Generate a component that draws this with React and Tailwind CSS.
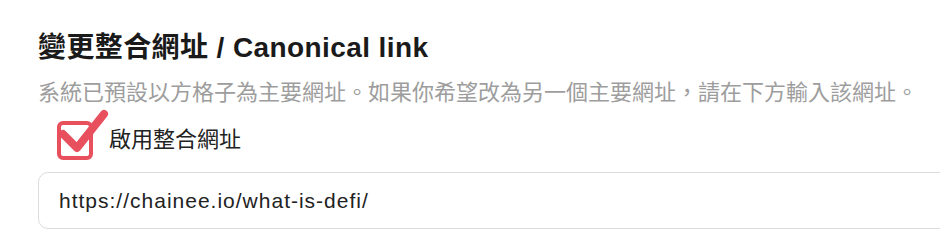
import React, { useState } from "react";

const font = "font-['Liberation_Sans','Noto_Sans_CJK_TC',sans-serif]";

const CheckIcon = ({ checked }) => (
  <svg width="54" height="54" viewBox="0 0 54 54" className="shrink-0">
    <rect x="4" y="15" width="32" height="35" rx="4" fill="#fff" stroke="#e9505e" strokeWidth="4" />
    {checked && (
      <polyline
        points="8,26 22,40 49,6"
        fill="none"
        stroke="#e9505e"
        strokeWidth="8"
        strokeLinecap="round"
        strokeLinejoin="round"
      />
    )}
  </svg>
);

const App = () => {
  const [enabled, setEnabled] = useState(true);
  const [url, setUrl] = useState("https://chainee.io/what-is-defi/");

  return (
    <div className={`w-[940px] h-[238px] overflow-hidden bg-white pl-[38px] pt-[30px] ${font}`}>
      <h2 className="text-[28px] leading-[36px] font-bold tracking-[0.4px] text-[#1a1a1a]">
        變更整合網址 / Canonical link
      </h2>
      <p className="mt-[12px] text-[22px] leading-[30px] text-[#9d9d9d] whitespace-nowrap">
        系統已預設以方格子為主要網址。如果你希望改為另一個主要網址，請在下方輸入該網址。
      </p>
      <label
        className="flex items-start ml-[17px] cursor-pointer select-none w-fit"
        onClick={() => setEnabled(!enabled)}
      >
        <CheckIcon checked={enabled} />
        <span className="mt-[17px] text-[22px] leading-[30px] text-[#222]">啟用整合網址</span>
      </label>
      <input
        className="mt-[10px] w-[940px] h-[57px] rounded-[10px] border border-[#dcdcdc] pl-[20px] text-[21px] tracking-[1px] text-[#222] outline-none"
        value={url}
        onChange={(e) => setUrl(e.target.value)}
      />
    </div>
  );
};

export default App;
